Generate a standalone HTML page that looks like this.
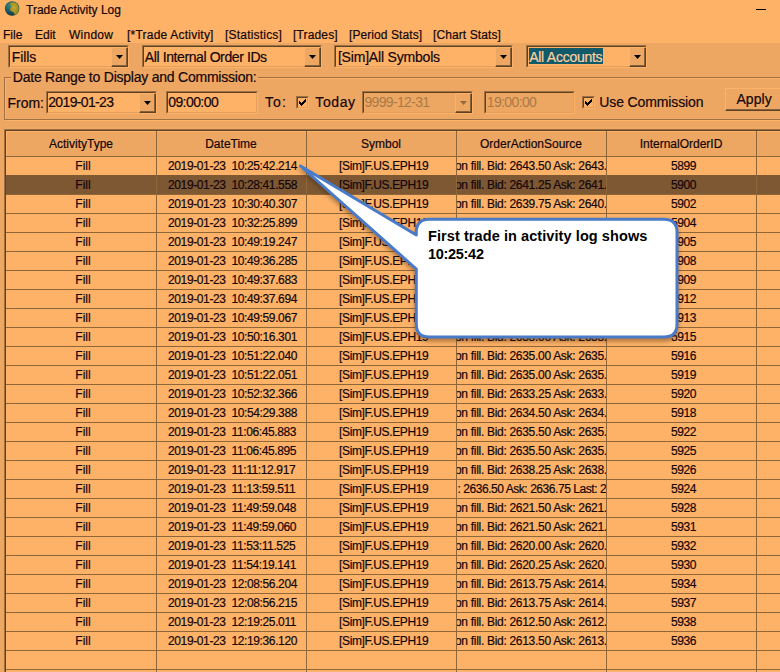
<!DOCTYPE html><html><head><meta charset="utf-8"><style>
*{margin:0;padding:0;box-sizing:border-box}
html,body{width:780px;height:672px;overflow:hidden;background:#FDB268;font-family:"Liberation Sans", sans-serif;color:#14060A}
.a.t12,.a.t13,.a.t14{-webkit-text-stroke:0.2px #14060A}
.a{position:absolute;white-space:pre}
.t12{font-size:12px;line-height:14px}
.t13{font-size:13px;line-height:15px}
.t14{font-size:14px;line-height:15px}
.sunk{position:absolute;border-top:1px solid #9F7041;border-left:1px solid #9F7041;border-right:1px solid #FDB268;border-bottom:1px solid #FDB268}
.sunk>.in{position:absolute;left:0;top:0;right:0;bottom:0;border-top:1px solid #5E4226;border-left:1px solid #5E4226;border-right:1px solid #E3A05C;border-bottom:1px solid #E3A05C;background:#FDB268}
.btn{position:absolute;background:#EEA762;border-top:1px solid #FDB268;border-left:1px solid #FDB268;border-right:1px solid #5E4226;border-bottom:1px solid #5E4226}
.btn>.in{position:absolute;left:0;top:0;right:0;bottom:0;border-right:1px solid #85603C;border-bottom:1px solid #85603C}
.arr{position:absolute;width:0;height:0;border-left:4px solid transparent;border-right:4px solid transparent;border-top:4px solid #000}
.row{position:absolute;left:6px;width:774px;height:19px;border-bottom:1px solid #8F6638}
.cell{position:absolute;top:0;height:18px;font-size:12px;line-height:14px;white-space:pre;overflow:hidden}
.vl{position:absolute;top:131px;width:1px;height:541px;background:#8F6638}
</style></head><body>
<div class="a" style="left:0;top:0;width:780px;height:43px;background:#FDB268"></div>
<svg class="a" style="left:4px;top:0px" width="16" height="17" viewBox="0 0 16 17">
<defs><radialGradient id="g" cx="0.35" cy="0.3" r="0.75"><stop offset="0" stop-color="#3a8a80"/><stop offset="0.6" stop-color="#1a5060"/><stop offset="1" stop-color="#0e3040"/></radialGradient>
<radialGradient id="l" cx="0.45" cy="0.4" r="0.6"><stop offset="0" stop-color="#c8a830"/><stop offset="1" stop-color="#8a8a20"/></radialGradient></defs>
<ellipse cx="8.1" cy="8.5" rx="7.2" ry="7.3" fill="url(#g)"/>
<path d="M6 3.2 C8 1.8 11.5 2.2 13.5 4 C15 6 15.2 9 14.6 11 C13.8 13 12.5 14.5 10.8 15.2 C10 13.5 9.8 12.2 8.5 11.8 C6.8 11.3 5.8 10.5 6 9 C6.3 7.6 7.5 7.2 7.2 6.2 C6.8 5.2 5.6 4.4 6 3.2Z" fill="url(#l)"/>
</svg>
<div class="a t12" style="left:26px;top:3px">Trade Activity Log</div>
<div class="a" style="left:756px;top:9px;width:10px;height:1px;background:#000"></div>
<div class="a t12" style="left:3px;top:28px;letter-spacing:0px">File</div>
<div class="a t12" style="left:35px;top:28px;letter-spacing:0px">Edit</div>
<div class="a t12" style="left:69px;top:28px;letter-spacing:0.25px">Window</div>
<div class="a t12" style="left:127px;top:28px;letter-spacing:0.22px">[*Trade Activity]</div>
<div class="a t12" style="left:225px;top:28px;letter-spacing:0.2px">[Statistics]</div>
<div class="a t12" style="left:293px;top:28px;letter-spacing:0.15px">[Trades]</div>
<div class="a t12" style="left:349px;top:28px;letter-spacing:0.08px">[Period Stats]</div>
<div class="a t12" style="left:433px;top:28px;letter-spacing:0.1px">[Chart Stats]</div>
<div class="a" style="left:0;top:43px;width:780px;height:629px;background:#EEA762"></div>
<div class="sunk" style="left:8px;top:45px;width:121px;height:23px"><div class="in"></div></div>
<div class="btn" style="left:111px;top:47px;width:17px;height:20px"><div class="in"></div></div>
<svg class="a" style="left:116px;top:55px" width="7" height="4" viewBox="0 0 7 4"><path d="M0 0H7L3.5 4Z" fill="#000"/></svg>
<div class="a t14" style="left:11.8px;top:50px;color:#14060A;letter-spacing:-0.13px">Fills</div>
<div class="sunk" style="left:142px;top:45px;width:180px;height:23px"><div class="in"></div></div>
<div class="btn" style="left:304px;top:47px;width:17px;height:20px"><div class="in"></div></div>
<svg class="a" style="left:309px;top:55px" width="7" height="4" viewBox="0 0 7 4"><path d="M0 0H7L3.5 4Z" fill="#000"/></svg>
<div class="a t14" style="left:144.8px;top:50px;color:#14060A;letter-spacing:-0.4px">All Internal Order IDs</div>
<div class="sunk" style="left:334px;top:45px;width:179px;height:23px"><div class="in"></div></div>
<div class="btn" style="left:495px;top:47px;width:17px;height:20px"><div class="in"></div></div>
<svg class="a" style="left:500px;top:55px" width="7" height="4" viewBox="0 0 7 4"><path d="M0 0H7L3.5 4Z" fill="#000"/></svg>
<div class="a t14" style="left:337.9px;top:50px;color:#14060A;letter-spacing:-0.19px">[Sim]All Symbols</div>
<div class="sunk" style="left:526px;top:45px;width:121px;height:23px"><div class="in"></div></div>
<div class="btn" style="left:629px;top:47px;width:17px;height:20px"><div class="in"></div></div>
<svg class="a" style="left:634px;top:55px" width="7" height="4" viewBox="0 0 7 4"><path d="M0 0H7L3.5 4Z" fill="#000"/></svg>
<div class="a" style="left:529px;top:48px;width:74px;height:16px;background:#12596A"></div>
<div class="a t14" style="left:529.2px;top:50px;letter-spacing:-0.26px;color:#FDD2A0;-webkit-text-stroke:0.2px #FDD2A0">All Accounts</div>
<div class="a" style="left:5px;top:78px;width:790px;height:43px;border-top:1px solid #FDB268;border-left:1px solid #FDB268;border-bottom:1px solid #FDB268"></div>
<div class="a" style="left:4px;top:77px;width:790px;height:43px;border-top:1px solid #9F7041;border-left:1px solid #9F7041;border-bottom:1px solid #9F7041"></div>
<div class="a t14" style="left:10.8px;top:70px;background:#EEA762;padding:0 2px;letter-spacing:-0.23px">Date Range to Display and Commission:</div>
<div class="a t14" style="left:7.6px;top:96px;letter-spacing:-0.05px">From:</div>
<div class="sunk" style="left:46px;top:91px;width:111px;height:23px"><div class="in"></div></div>
<div class="btn" style="left:139px;top:93px;width:17px;height:20px"><div class="in"></div></div>
<svg class="a" style="left:144px;top:101px" width="7" height="4" viewBox="0 0 7 4"><path d="M0 0H7L3.5 4Z" fill="#000"/></svg>
<div class="a t14" style="left:48.2px;top:95px;letter-spacing:-0.64px">2019-01-23</div>
<div class="sunk" style="left:166px;top:91px;width:92px;height:23px"><div class="in"></div></div>
<div class="a t14" style="left:168.2px;top:95px;letter-spacing:-0.57px">09:00:00</div>
<div class="a t14" style="left:264.9px;top:95px;letter-spacing:1.2px">To:</div>
<div class="sunk" style="left:296px;top:96px;width:13px;height:13px"><div class="in"></div></div>
<svg class="a" style="left:299px;top:99px" width="7" height="7" viewBox="0 0 7 7" shape-rendering="crispEdges"><path d="M6 0h1v1h-1zM5 1h1v1h-1zM6 1h1v1h-1zM0 2h1v1h-1zM4 2h1v1h-1zM5 2h1v1h-1zM6 2h1v1h-1zM0 3h1v1h-1zM1 3h1v1h-1zM3 3h1v1h-1zM4 3h1v1h-1zM5 3h1v1h-1zM0 4h1v1h-1zM1 4h1v1h-1zM2 4h1v1h-1zM3 4h1v1h-1zM4 4h1v1h-1zM1 5h1v1h-1zM2 5h1v1h-1zM3 5h1v1h-1zM2 6h1v1h-1z" fill="#000"/></svg>
<div class="a t14" style="left:315.3px;top:95px;letter-spacing:0.6px">Today</div>
<div class="sunk" style="left:362px;top:91px;width:111px;height:23px"><div class="in" style="background:#EEA762"></div></div>
<div class="btn" style="left:455px;top:93px;width:17px;height:20px"><div class="in"></div></div>
<svg class="a" style="left:460px;top:101px" width="7" height="4" viewBox="0 0 7 4"><path d="M0 0H7L3.5 4Z" fill="#8F6A45"/></svg>
<div class="a t14" style="left:364.4px;top:95px;letter-spacing:-0.66px;color:#A87A48;-webkit-text-stroke:0">9999-12-31</div>
<div class="sunk" style="left:484px;top:91px;width:91px;height:23px"><div class="in" style="background:#EEA762"></div></div>
<div class="a t14" style="left:486.8px;top:95px;letter-spacing:-0.64px;color:#A87A48;-webkit-text-stroke:0">19:00:00</div>
<div class="sunk" style="left:582px;top:96px;width:13px;height:13px"><div class="in"></div></div>
<svg class="a" style="left:585px;top:99px" width="7" height="7" viewBox="0 0 7 7" shape-rendering="crispEdges"><path d="M6 0h1v1h-1zM5 1h1v1h-1zM6 1h1v1h-1zM0 2h1v1h-1zM4 2h1v1h-1zM5 2h1v1h-1zM6 2h1v1h-1zM0 3h1v1h-1zM1 3h1v1h-1zM3 3h1v1h-1zM4 3h1v1h-1zM5 3h1v1h-1zM0 4h1v1h-1zM1 4h1v1h-1zM2 4h1v1h-1zM3 4h1v1h-1zM4 4h1v1h-1zM1 5h1v1h-1zM2 5h1v1h-1zM3 5h1v1h-1zM2 6h1v1h-1z" fill="#000"/></svg>
<div class="a t14" style="left:599.3px;top:95px;letter-spacing:-0.12px">Use Commission</div>
<div class="btn" style="left:725px;top:88px;width:70px;height:23px"><div class="in"></div></div>
<div class="a t14" style="left:736.4px;top:92px;letter-spacing:0.1px">Apply</div>
<div class="a" style="left:4px;top:129px;width:790px;height:560px;border-top:1px solid #9F7041;border-left:1px solid #9F7041"></div>
<div class="a" style="left:5px;top:130px;width:790px;height:560px;border-top:1px solid #5E4226;border-left:1px solid #5E4226;background:#FDB268"></div>
<div class="a" style="left:6px;top:131px;width:774px;height:26px;background:#EEA762;border-bottom:1px solid #8F6638"></div>
<div class="a" style="left:6px;top:131px;width:774px;height:1px;background:#FDB268"></div>
<div class="a" style="left:6px;top:131px;width:1px;height:25px;background:#FDB268"></div>
<div class="a t12" style="left:6px;width:150px;text-align:center;top:137px">ActivityType</div>
<div class="a t12" style="left:156px;width:150px;text-align:center;top:137px">DateTime</div>
<div class="a t12" style="left:306px;width:150px;text-align:center;top:137px">Symbol</div>
<div class="a t12" style="left:456px;width:150px;text-align:center;top:137px">OrderActionSource</div>
<div class="a t12" style="left:606px;width:150px;text-align:center;top:137px">InternalOrderID</div>
<div class="a" style="left:6px;top:157px;width:774px;height:18px;background:#FDB268"></div>
<div class="a" style="left:6px;top:175px;width:774px;height:1px;background:#8F6638"></div>
<div class="a t12" style="left:8px;width:150px;text-align:center;top:159px">Fill</div>
<div class="a t12" style="left:168px;top:159px;letter-spacing:-0.38px">2019-01-23  10:25:42.214</div>
<div class="a t12" style="left:339px;top:159px;letter-spacing:-0.35px">[Sim]F.US.EPH19</div>
<div class="a" style="left:457px;top:157px;width:149px;height:18px;overflow:hidden"><div class="a t12" style="left:-2px;top:2px;letter-spacing:-0.3px">on fill. Bid: 2643.50 Ask: 2643.75 Last</div></div>
<div class="a t12" style="left:671px;top:159px;letter-spacing:-0.4px">5899</div>
<div class="a" style="left:6px;top:175px;width:774px;height:20px;background:#7D5833"></div>
<div class="a" style="left:6px;top:194px;width:774px;height:1px;background:#8F6638"></div>
<div class="a t12" style="left:8px;width:150px;text-align:center;top:178px">Fill</div>
<div class="a t12" style="left:168px;top:178px;letter-spacing:-0.38px">2019-01-23  10:28:41.558</div>
<div class="a t12" style="left:339px;top:178px;letter-spacing:-0.35px">[Sim]F.US.EPH19</div>
<div class="a" style="left:457px;top:176px;width:149px;height:18px;overflow:hidden"><div class="a t12" style="left:-2px;top:2px;letter-spacing:-0.3px">on fill. Bid: 2641.25 Ask: 2641.50 Last</div></div>
<div class="a t12" style="left:671px;top:178px;letter-spacing:-0.4px">5900</div>
<div class="a" style="left:6px;top:195px;width:774px;height:18px;background:#FDB268"></div>
<div class="a" style="left:6px;top:213px;width:774px;height:1px;background:#8F6638"></div>
<div class="a t12" style="left:8px;width:150px;text-align:center;top:197px">Fill</div>
<div class="a t12" style="left:168px;top:197px;letter-spacing:-0.38px">2019-01-23  10:30:40.307</div>
<div class="a t12" style="left:339px;top:197px;letter-spacing:-0.35px">[Sim]F.US.EPH19</div>
<div class="a" style="left:457px;top:195px;width:149px;height:18px;overflow:hidden"><div class="a t12" style="left:-2px;top:2px;letter-spacing:-0.3px">on fill. Bid: 2639.75 Ask: 2640.00 Last</div></div>
<div class="a t12" style="left:671px;top:197px;letter-spacing:-0.4px">5902</div>
<div class="a" style="left:6px;top:214px;width:774px;height:18px;background:#FDB268"></div>
<div class="a" style="left:6px;top:232px;width:774px;height:1px;background:#8F6638"></div>
<div class="a t12" style="left:8px;width:150px;text-align:center;top:216px">Fill</div>
<div class="a t12" style="left:168px;top:216px;letter-spacing:-0.38px">2019-01-23  10:32:25.899</div>
<div class="a t12" style="left:339px;top:216px;letter-spacing:-0.35px">[Sim]F.US.EPH19</div>
<div class="a" style="left:457px;top:214px;width:149px;height:18px;overflow:hidden"><div class="a t12" style="left:-2px;top:2px;letter-spacing:-0.3px">on fill. Bid: 2637.00 Ask: 2637.25 Last</div></div>
<div class="a t12" style="left:671px;top:216px;letter-spacing:-0.4px">5904</div>
<div class="a" style="left:6px;top:233px;width:774px;height:18px;background:#FDB268"></div>
<div class="a" style="left:6px;top:251px;width:774px;height:1px;background:#8F6638"></div>
<div class="a t12" style="left:8px;width:150px;text-align:center;top:235px">Fill</div>
<div class="a t12" style="left:168px;top:235px;letter-spacing:-0.38px">2019-01-23  10:49:19.247</div>
<div class="a t12" style="left:339px;top:235px;letter-spacing:-0.35px">[Sim]F.US.EPH19</div>
<div class="a" style="left:457px;top:233px;width:149px;height:18px;overflow:hidden"><div class="a t12" style="left:-2px;top:2px;letter-spacing:-0.3px">on fill. Bid: 2636.00 Ask: 2636.25 Last</div></div>
<div class="a t12" style="left:671px;top:235px;letter-spacing:-0.4px">5905</div>
<div class="a" style="left:6px;top:252px;width:774px;height:18px;background:#FDB268"></div>
<div class="a" style="left:6px;top:270px;width:774px;height:1px;background:#8F6638"></div>
<div class="a t12" style="left:8px;width:150px;text-align:center;top:254px">Fill</div>
<div class="a t12" style="left:168px;top:254px;letter-spacing:-0.38px">2019-01-23  10:49:36.285</div>
<div class="a t12" style="left:339px;top:254px;letter-spacing:-0.35px">[Sim]F.US.EPH19</div>
<div class="a" style="left:457px;top:252px;width:149px;height:18px;overflow:hidden"><div class="a t12" style="left:-2px;top:2px;letter-spacing:-0.3px">on fill. Bid: 2636.00 Ask: 2636.25 Last</div></div>
<div class="a t12" style="left:671px;top:254px;letter-spacing:-0.4px">5908</div>
<div class="a" style="left:6px;top:271px;width:774px;height:18px;background:#FDB268"></div>
<div class="a" style="left:6px;top:289px;width:774px;height:1px;background:#8F6638"></div>
<div class="a t12" style="left:8px;width:150px;text-align:center;top:273px">Fill</div>
<div class="a t12" style="left:168px;top:273px;letter-spacing:-0.38px">2019-01-23  10:49:37.683</div>
<div class="a t12" style="left:339px;top:273px;letter-spacing:-0.35px">[Sim]F.US.EPH19</div>
<div class="a" style="left:457px;top:271px;width:149px;height:18px;overflow:hidden"><div class="a t12" style="left:-2px;top:2px;letter-spacing:-0.3px">on fill. Bid: 2636.00 Ask: 2636.25 Last</div></div>
<div class="a t12" style="left:671px;top:273px;letter-spacing:-0.4px">5909</div>
<div class="a" style="left:6px;top:290px;width:774px;height:18px;background:#FDB268"></div>
<div class="a" style="left:6px;top:308px;width:774px;height:1px;background:#8F6638"></div>
<div class="a t12" style="left:8px;width:150px;text-align:center;top:292px">Fill</div>
<div class="a t12" style="left:168px;top:292px;letter-spacing:-0.38px">2019-01-23  10:49:37.694</div>
<div class="a t12" style="left:339px;top:292px;letter-spacing:-0.35px">[Sim]F.US.EPH19</div>
<div class="a" style="left:457px;top:290px;width:149px;height:18px;overflow:hidden"><div class="a t12" style="left:-2px;top:2px;letter-spacing:-0.3px">on fill. Bid: 2636.00 Ask: 2636.25 Last</div></div>
<div class="a t12" style="left:671px;top:292px;letter-spacing:-0.4px">5912</div>
<div class="a" style="left:6px;top:309px;width:774px;height:18px;background:#FDB268"></div>
<div class="a" style="left:6px;top:327px;width:774px;height:1px;background:#8F6638"></div>
<div class="a t12" style="left:8px;width:150px;text-align:center;top:311px">Fill</div>
<div class="a t12" style="left:168px;top:311px;letter-spacing:-0.38px">2019-01-23  10:49:59.067</div>
<div class="a t12" style="left:339px;top:311px;letter-spacing:-0.35px">[Sim]F.US.EPH19</div>
<div class="a" style="left:457px;top:309px;width:149px;height:18px;overflow:hidden"><div class="a t12" style="left:-2px;top:2px;letter-spacing:-0.3px">on fill. Bid: 2635.00 Ask: 2635.25 Last</div></div>
<div class="a t12" style="left:671px;top:311px;letter-spacing:-0.4px">5913</div>
<div class="a" style="left:6px;top:328px;width:774px;height:18px;background:#FDB268"></div>
<div class="a" style="left:6px;top:346px;width:774px;height:1px;background:#8F6638"></div>
<div class="a t12" style="left:8px;width:150px;text-align:center;top:330px">Fill</div>
<div class="a t12" style="left:168px;top:330px;letter-spacing:-0.38px">2019-01-23  10:50:16.301</div>
<div class="a t12" style="left:339px;top:330px;letter-spacing:-0.35px">[Sim]F.US.EPH19</div>
<div class="a" style="left:457px;top:328px;width:149px;height:18px;overflow:hidden"><div class="a t12" style="left:-2px;top:2px;letter-spacing:-0.3px">on fill. Bid: 2635.00 Ask: 2635.25 Last</div></div>
<div class="a t12" style="left:671px;top:330px;letter-spacing:-0.4px">5915</div>
<div class="a" style="left:6px;top:347px;width:774px;height:18px;background:#FDB268"></div>
<div class="a" style="left:6px;top:365px;width:774px;height:1px;background:#8F6638"></div>
<div class="a t12" style="left:8px;width:150px;text-align:center;top:349px">Fill</div>
<div class="a t12" style="left:168px;top:349px;letter-spacing:-0.38px">2019-01-23  10:51:22.040</div>
<div class="a t12" style="left:339px;top:349px;letter-spacing:-0.35px">[Sim]F.US.EPH19</div>
<div class="a" style="left:457px;top:347px;width:149px;height:18px;overflow:hidden"><div class="a t12" style="left:-2px;top:2px;letter-spacing:-0.3px">on fill. Bid: 2635.00 Ask: 2635.25 Last</div></div>
<div class="a t12" style="left:671px;top:349px;letter-spacing:-0.4px">5916</div>
<div class="a" style="left:6px;top:366px;width:774px;height:18px;background:#FDB268"></div>
<div class="a" style="left:6px;top:384px;width:774px;height:1px;background:#8F6638"></div>
<div class="a t12" style="left:8px;width:150px;text-align:center;top:368px">Fill</div>
<div class="a t12" style="left:168px;top:368px;letter-spacing:-0.38px">2019-01-23  10:51:22.051</div>
<div class="a t12" style="left:339px;top:368px;letter-spacing:-0.35px">[Sim]F.US.EPH19</div>
<div class="a" style="left:457px;top:366px;width:149px;height:18px;overflow:hidden"><div class="a t12" style="left:-2px;top:2px;letter-spacing:-0.3px">on fill. Bid: 2635.00 Ask: 2635.25 Last</div></div>
<div class="a t12" style="left:671px;top:368px;letter-spacing:-0.4px">5919</div>
<div class="a" style="left:6px;top:385px;width:774px;height:18px;background:#FDB268"></div>
<div class="a" style="left:6px;top:403px;width:774px;height:1px;background:#8F6638"></div>
<div class="a t12" style="left:8px;width:150px;text-align:center;top:387px">Fill</div>
<div class="a t12" style="left:168px;top:387px;letter-spacing:-0.38px">2019-01-23  10:52:32.366</div>
<div class="a t12" style="left:339px;top:387px;letter-spacing:-0.35px">[Sim]F.US.EPH19</div>
<div class="a" style="left:457px;top:385px;width:149px;height:18px;overflow:hidden"><div class="a t12" style="left:-2px;top:2px;letter-spacing:-0.3px">on fill. Bid: 2633.25 Ask: 2633.50 Last</div></div>
<div class="a t12" style="left:671px;top:387px;letter-spacing:-0.4px">5920</div>
<div class="a" style="left:6px;top:404px;width:774px;height:18px;background:#FDB268"></div>
<div class="a" style="left:6px;top:422px;width:774px;height:1px;background:#8F6638"></div>
<div class="a t12" style="left:8px;width:150px;text-align:center;top:406px">Fill</div>
<div class="a t12" style="left:168px;top:406px;letter-spacing:-0.38px">2019-01-23  10:54:29.388</div>
<div class="a t12" style="left:339px;top:406px;letter-spacing:-0.35px">[Sim]F.US.EPH19</div>
<div class="a" style="left:457px;top:404px;width:149px;height:18px;overflow:hidden"><div class="a t12" style="left:-2px;top:2px;letter-spacing:-0.3px">on fill. Bid: 2634.50 Ask: 2634.75 Last</div></div>
<div class="a t12" style="left:671px;top:406px;letter-spacing:-0.4px">5918</div>
<div class="a" style="left:6px;top:423px;width:774px;height:18px;background:#FDB268"></div>
<div class="a" style="left:6px;top:441px;width:774px;height:1px;background:#8F6638"></div>
<div class="a t12" style="left:8px;width:150px;text-align:center;top:425px">Fill</div>
<div class="a t12" style="left:168px;top:425px;letter-spacing:-0.38px">2019-01-23  11:06:45.883</div>
<div class="a t12" style="left:339px;top:425px;letter-spacing:-0.35px">[Sim]F.US.EPH19</div>
<div class="a" style="left:457px;top:423px;width:149px;height:18px;overflow:hidden"><div class="a t12" style="left:-2px;top:2px;letter-spacing:-0.3px">on fill. Bid: 2635.50 Ask: 2635.75 Last</div></div>
<div class="a t12" style="left:671px;top:425px;letter-spacing:-0.4px">5922</div>
<div class="a" style="left:6px;top:442px;width:774px;height:18px;background:#FDB268"></div>
<div class="a" style="left:6px;top:460px;width:774px;height:1px;background:#8F6638"></div>
<div class="a t12" style="left:8px;width:150px;text-align:center;top:444px">Fill</div>
<div class="a t12" style="left:168px;top:444px;letter-spacing:-0.38px">2019-01-23  11:06:45.895</div>
<div class="a t12" style="left:339px;top:444px;letter-spacing:-0.35px">[Sim]F.US.EPH19</div>
<div class="a" style="left:457px;top:442px;width:149px;height:18px;overflow:hidden"><div class="a t12" style="left:-2px;top:2px;letter-spacing:-0.3px">on fill. Bid: 2635.50 Ask: 2635.75 Last</div></div>
<div class="a t12" style="left:671px;top:444px;letter-spacing:-0.4px">5925</div>
<div class="a" style="left:6px;top:461px;width:774px;height:18px;background:#FDB268"></div>
<div class="a" style="left:6px;top:479px;width:774px;height:1px;background:#8F6638"></div>
<div class="a t12" style="left:8px;width:150px;text-align:center;top:463px">Fill</div>
<div class="a t12" style="left:168px;top:463px;letter-spacing:-0.38px">2019-01-23  11:11:12.917</div>
<div class="a t12" style="left:339px;top:463px;letter-spacing:-0.35px">[Sim]F.US.EPH19</div>
<div class="a" style="left:457px;top:461px;width:149px;height:18px;overflow:hidden"><div class="a t12" style="left:-2px;top:2px;letter-spacing:-0.3px">on fill. Bid: 2638.25 Ask: 2638.50 Last</div></div>
<div class="a t12" style="left:671px;top:463px;letter-spacing:-0.4px">5926</div>
<div class="a" style="left:6px;top:480px;width:774px;height:18px;background:#FDB268"></div>
<div class="a" style="left:6px;top:498px;width:774px;height:1px;background:#8F6638"></div>
<div class="a t12" style="left:8px;width:150px;text-align:center;top:482px">Fill</div>
<div class="a t12" style="left:168px;top:482px;letter-spacing:-0.38px">2019-01-23  11:13:59.511</div>
<div class="a t12" style="left:339px;top:482px;letter-spacing:-0.35px">[Sim]F.US.EPH19</div>
<div class="a" style="left:457px;top:480px;width:149px;height:18px;overflow:hidden"><div class="a t12" style="left:0.5px;top:2px;letter-spacing:-0.45px">: 2636.50 Ask: 2636.75 Last: 2636.75</div></div>
<div class="a t12" style="left:671px;top:482px;letter-spacing:-0.4px">5924</div>
<div class="a" style="left:6px;top:499px;width:774px;height:18px;background:#FDB268"></div>
<div class="a" style="left:6px;top:517px;width:774px;height:1px;background:#8F6638"></div>
<div class="a t12" style="left:8px;width:150px;text-align:center;top:501px">Fill</div>
<div class="a t12" style="left:168px;top:501px;letter-spacing:-0.38px">2019-01-23  11:49:59.048</div>
<div class="a t12" style="left:339px;top:501px;letter-spacing:-0.35px">[Sim]F.US.EPH19</div>
<div class="a" style="left:457px;top:499px;width:149px;height:18px;overflow:hidden"><div class="a t12" style="left:-2px;top:2px;letter-spacing:-0.3px">on fill. Bid: 2621.50 Ask: 2621.75 Last</div></div>
<div class="a t12" style="left:671px;top:501px;letter-spacing:-0.4px">5928</div>
<div class="a" style="left:6px;top:518px;width:774px;height:18px;background:#FDB268"></div>
<div class="a" style="left:6px;top:536px;width:774px;height:1px;background:#8F6638"></div>
<div class="a t12" style="left:8px;width:150px;text-align:center;top:520px">Fill</div>
<div class="a t12" style="left:168px;top:520px;letter-spacing:-0.38px">2019-01-23  11:49:59.060</div>
<div class="a t12" style="left:339px;top:520px;letter-spacing:-0.35px">[Sim]F.US.EPH19</div>
<div class="a" style="left:457px;top:518px;width:149px;height:18px;overflow:hidden"><div class="a t12" style="left:-2px;top:2px;letter-spacing:-0.3px">on fill. Bid: 2621.50 Ask: 2621.75 Last</div></div>
<div class="a t12" style="left:671px;top:520px;letter-spacing:-0.4px">5931</div>
<div class="a" style="left:6px;top:537px;width:774px;height:18px;background:#FDB268"></div>
<div class="a" style="left:6px;top:555px;width:774px;height:1px;background:#8F6638"></div>
<div class="a t12" style="left:8px;width:150px;text-align:center;top:539px">Fill</div>
<div class="a t12" style="left:168px;top:539px;letter-spacing:-0.38px">2019-01-23  11:53:11.525</div>
<div class="a t12" style="left:339px;top:539px;letter-spacing:-0.35px">[Sim]F.US.EPH19</div>
<div class="a" style="left:457px;top:537px;width:149px;height:18px;overflow:hidden"><div class="a t12" style="left:-2px;top:2px;letter-spacing:-0.3px">on fill. Bid: 2620.00 Ask: 2620.25 Last</div></div>
<div class="a t12" style="left:671px;top:539px;letter-spacing:-0.4px">5932</div>
<div class="a" style="left:6px;top:556px;width:774px;height:18px;background:#FDB268"></div>
<div class="a" style="left:6px;top:574px;width:774px;height:1px;background:#8F6638"></div>
<div class="a t12" style="left:8px;width:150px;text-align:center;top:558px">Fill</div>
<div class="a t12" style="left:168px;top:558px;letter-spacing:-0.38px">2019-01-23  11:54:19.141</div>
<div class="a t12" style="left:339px;top:558px;letter-spacing:-0.35px">[Sim]F.US.EPH19</div>
<div class="a" style="left:457px;top:556px;width:149px;height:18px;overflow:hidden"><div class="a t12" style="left:-2px;top:2px;letter-spacing:-0.3px">on fill. Bid: 2620.25 Ask: 2620.50 Last</div></div>
<div class="a t12" style="left:671px;top:558px;letter-spacing:-0.4px">5930</div>
<div class="a" style="left:6px;top:575px;width:774px;height:18px;background:#FDB268"></div>
<div class="a" style="left:6px;top:593px;width:774px;height:1px;background:#8F6638"></div>
<div class="a t12" style="left:8px;width:150px;text-align:center;top:577px">Fill</div>
<div class="a t12" style="left:168px;top:577px;letter-spacing:-0.38px">2019-01-23  12:08:56.204</div>
<div class="a t12" style="left:339px;top:577px;letter-spacing:-0.35px">[Sim]F.US.EPH19</div>
<div class="a" style="left:457px;top:575px;width:149px;height:18px;overflow:hidden"><div class="a t12" style="left:-2px;top:2px;letter-spacing:-0.3px">on fill. Bid: 2613.75 Ask: 2614.00 Last</div></div>
<div class="a t12" style="left:671px;top:577px;letter-spacing:-0.4px">5934</div>
<div class="a" style="left:6px;top:594px;width:774px;height:18px;background:#FDB268"></div>
<div class="a" style="left:6px;top:612px;width:774px;height:1px;background:#8F6638"></div>
<div class="a t12" style="left:8px;width:150px;text-align:center;top:596px">Fill</div>
<div class="a t12" style="left:168px;top:596px;letter-spacing:-0.38px">2019-01-23  12:08:56.215</div>
<div class="a t12" style="left:339px;top:596px;letter-spacing:-0.35px">[Sim]F.US.EPH19</div>
<div class="a" style="left:457px;top:594px;width:149px;height:18px;overflow:hidden"><div class="a t12" style="left:-2px;top:2px;letter-spacing:-0.3px">on fill. Bid: 2613.75 Ask: 2614.00 Last</div></div>
<div class="a t12" style="left:671px;top:596px;letter-spacing:-0.4px">5937</div>
<div class="a" style="left:6px;top:613px;width:774px;height:18px;background:#FDB268"></div>
<div class="a" style="left:6px;top:631px;width:774px;height:1px;background:#8F6638"></div>
<div class="a t12" style="left:8px;width:150px;text-align:center;top:615px">Fill</div>
<div class="a t12" style="left:168px;top:615px;letter-spacing:-0.38px">2019-01-23  12:19:25.011</div>
<div class="a t12" style="left:339px;top:615px;letter-spacing:-0.35px">[Sim]F.US.EPH19</div>
<div class="a" style="left:457px;top:613px;width:149px;height:18px;overflow:hidden"><div class="a t12" style="left:-2px;top:2px;letter-spacing:-0.3px">on fill. Bid: 2612.50 Ask: 2612.75 Last</div></div>
<div class="a t12" style="left:671px;top:615px;letter-spacing:-0.4px">5938</div>
<div class="a" style="left:6px;top:632px;width:774px;height:18px;background:#FDB268"></div>
<div class="a" style="left:6px;top:650px;width:774px;height:1px;background:#8F6638"></div>
<div class="a t12" style="left:8px;width:150px;text-align:center;top:634px">Fill</div>
<div class="a t12" style="left:168px;top:634px;letter-spacing:-0.38px">2019-01-23  12:19:36.120</div>
<div class="a t12" style="left:339px;top:634px;letter-spacing:-0.35px">[Sim]F.US.EPH19</div>
<div class="a" style="left:457px;top:632px;width:149px;height:18px;overflow:hidden"><div class="a t12" style="left:-2px;top:2px;letter-spacing:-0.3px">on fill. Bid: 2613.50 Ask: 2613.75 Last</div></div>
<div class="a t12" style="left:671px;top:634px;letter-spacing:-0.4px">5936</div>
<div class="a" style="left:6px;top:669px;width:774px;height:1px;background:#8F6638"></div>
<div class="vl" style="left:156px"></div>
<div class="vl" style="left:306px"></div>
<div class="vl" style="left:456px"></div>
<div class="vl" style="left:606px"></div>
<div class="vl" style="left:756px"></div>
<svg class="a" style="left:0;top:0;filter:drop-shadow(0px 3px 2px rgba(60,30,0,0.4))" width="780" height="672" viewBox="0 0 780 672">
<path d="M300.5 166 L416.3 235 L416.3 232.2 Q416.3 219.2 429.3 219.2 L664 219.2 Q677 219.2 677 232.2 L677 324 Q677 337 664 337 L429.3 337 Q416.3 337 416.3 324 L416.3 269 Z" fill="#FFFFFF" stroke="#4A7BC8" stroke-width="3" stroke-linejoin="round"/>
</svg>
<div class="a" style="left:428px;top:227px;font-size:14.5px;line-height:18px;font-weight:bold;color:#000;letter-spacing:0.08px">First trade in activity log shows<br><span style="letter-spacing:-0.3px">10:25:42</span></div>
</body></html>
